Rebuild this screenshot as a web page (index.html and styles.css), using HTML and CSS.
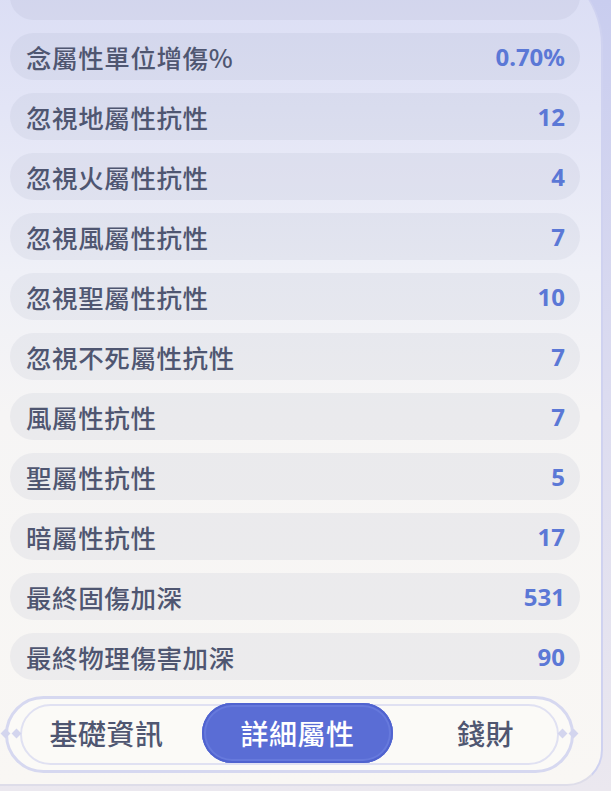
FILE: index.html
```html
<!DOCTYPE html>
<html lang="zh-Hant">
<head>
<meta charset="utf-8">
<link rel="stylesheet" href="styles.css">
</head>
<body>
<div class="panel">
  <div class="rows">
    <div class="row"></div>
    <div class="row"><span class="label">念屬性單位增傷%</span><span class="value">0.70%</span></div>
    <div class="row"><span class="label">忽視地屬性抗性</span><span class="value">12</span></div>
    <div class="row"><span class="label">忽視火屬性抗性</span><span class="value">4</span></div>
    <div class="row"><span class="label">忽視風屬性抗性</span><span class="value">7</span></div>
    <div class="row"><span class="label">忽視聖屬性抗性</span><span class="value">10</span></div>
    <div class="row"><span class="label">忽視不死屬性抗性</span><span class="value">7</span></div>
    <div class="row"><span class="label">風屬性抗性</span><span class="value">7</span></div>
    <div class="row"><span class="label">聖屬性抗性</span><span class="value">5</span></div>
    <div class="row"><span class="label">暗屬性抗性</span><span class="value">17</span></div>
    <div class="row"><span class="label">最終固傷加深</span><span class="value">531</span></div>
    <div class="row"><span class="label">最終物理傷害加深</span><span class="value">90</span></div>
  </div>
  <div class="tabbar">
    <span class="gem gem-l1"></span><span class="gem gem-l2"></span>
    <span class="gem gem-r1"></span><span class="gem gem-r2"></span>
    <div class="tab">基礎資訊</div>
    <div class="tab tab-active">詳細屬性</div>
    <div class="tab">錢財</div>
  </div>
</div>
</body>
</html>
```

FILE: styles.css
```css
html, body {
  margin: 0;
  padding: 0;
}
body {
  width: 611px;
  height: 791px;
  overflow: hidden;
  background: linear-gradient(180deg, #c9cdef 0%, #dcdcf0 50%, #ebe8ef 100%);
  font-family: "Noto Sans CJK TC", "Noto Sans", sans-serif;
}
.panel {
  box-sizing: border-box;
  width: 603px;
  height: 826px;
  margin-top: -40px;
  padding: 13px 21px 0 10px;
  background: linear-gradient(180deg, #d9dcf4 0%, #e3e5f6 18%, #eff0f7 38%, #f6f5f5 55%, #f9f7f4 100%);
  border-right: 2px solid #cfd2f0;
  border-bottom: 2px solid #dedde9;
  border-radius: 0 85px 36px 0;
  display: flex;
  flex-direction: column;
}
.rows {
  display: flex;
  flex-direction: column;
  gap: 13px;
}
.row {
  height: 47px;
  border-radius: 24px;
  background: rgba(120, 124, 165, 0.085);
  display: flex;
  align-items: center;
  justify-content: space-between;
  padding: 0 15px 0 16px;
}
.label {
  font-size: 25.5px;
  font-weight: 500;
  color: #4f5671;
  letter-spacing: 0.6px;
  line-height: 1;
}
.value {
  font-size: 24px;
  font-weight: 700;
  color: #5b78d6;
  line-height: 1;
  font-family: "Noto Sans", "Noto Sans CJK TC", sans-serif;
}
.tabbar {
  position: relative;
  box-sizing: border-box;
  margin: 16px 6px 0 -5px;
  height: 77px;
  border: 3px solid #d6d8f0;
  border-radius: 40px;
  background: #fbfaf7;
  display: grid;
  grid-template-columns: 191px 191px 191px;
  padding: 4px 0 7px 3px;
}
.tabbar::before {
  content: "";
  position: absolute;
  left: 12px;
  right: 12px;
  top: 5px;
  bottom: 5px;
  border: 2px solid #e0e1f2;
  border-radius: 32px;
}
.gem {
  position: absolute;
  top: 31px;
  width: 7px;
  height: 7px;
  background: #d3d5ee;
  transform: rotate(45deg);
}
.gem-l1 { left: -6px; }
.gem-l2 { left: 5px; }
.gem-r1 { right: -6px; }
.gem-r2 { right: 5px; }
.tab {
  position: relative;
  display: flex;
  align-items: center;
  justify-content: center;
  font-size: 28px;
  font-weight: 500;
  color: #4f5671;
  letter-spacing: 0.5px;
}
.tab:last-child {
  padding-right: 6px;
}
.tab-active {
  background: #5a6dd5;
  color: #ffffff;
  border-radius: 30px;
  box-shadow: inset 0 0 0 2px #5063cf, inset 0 0 0 4px #6679dc;
}
```
